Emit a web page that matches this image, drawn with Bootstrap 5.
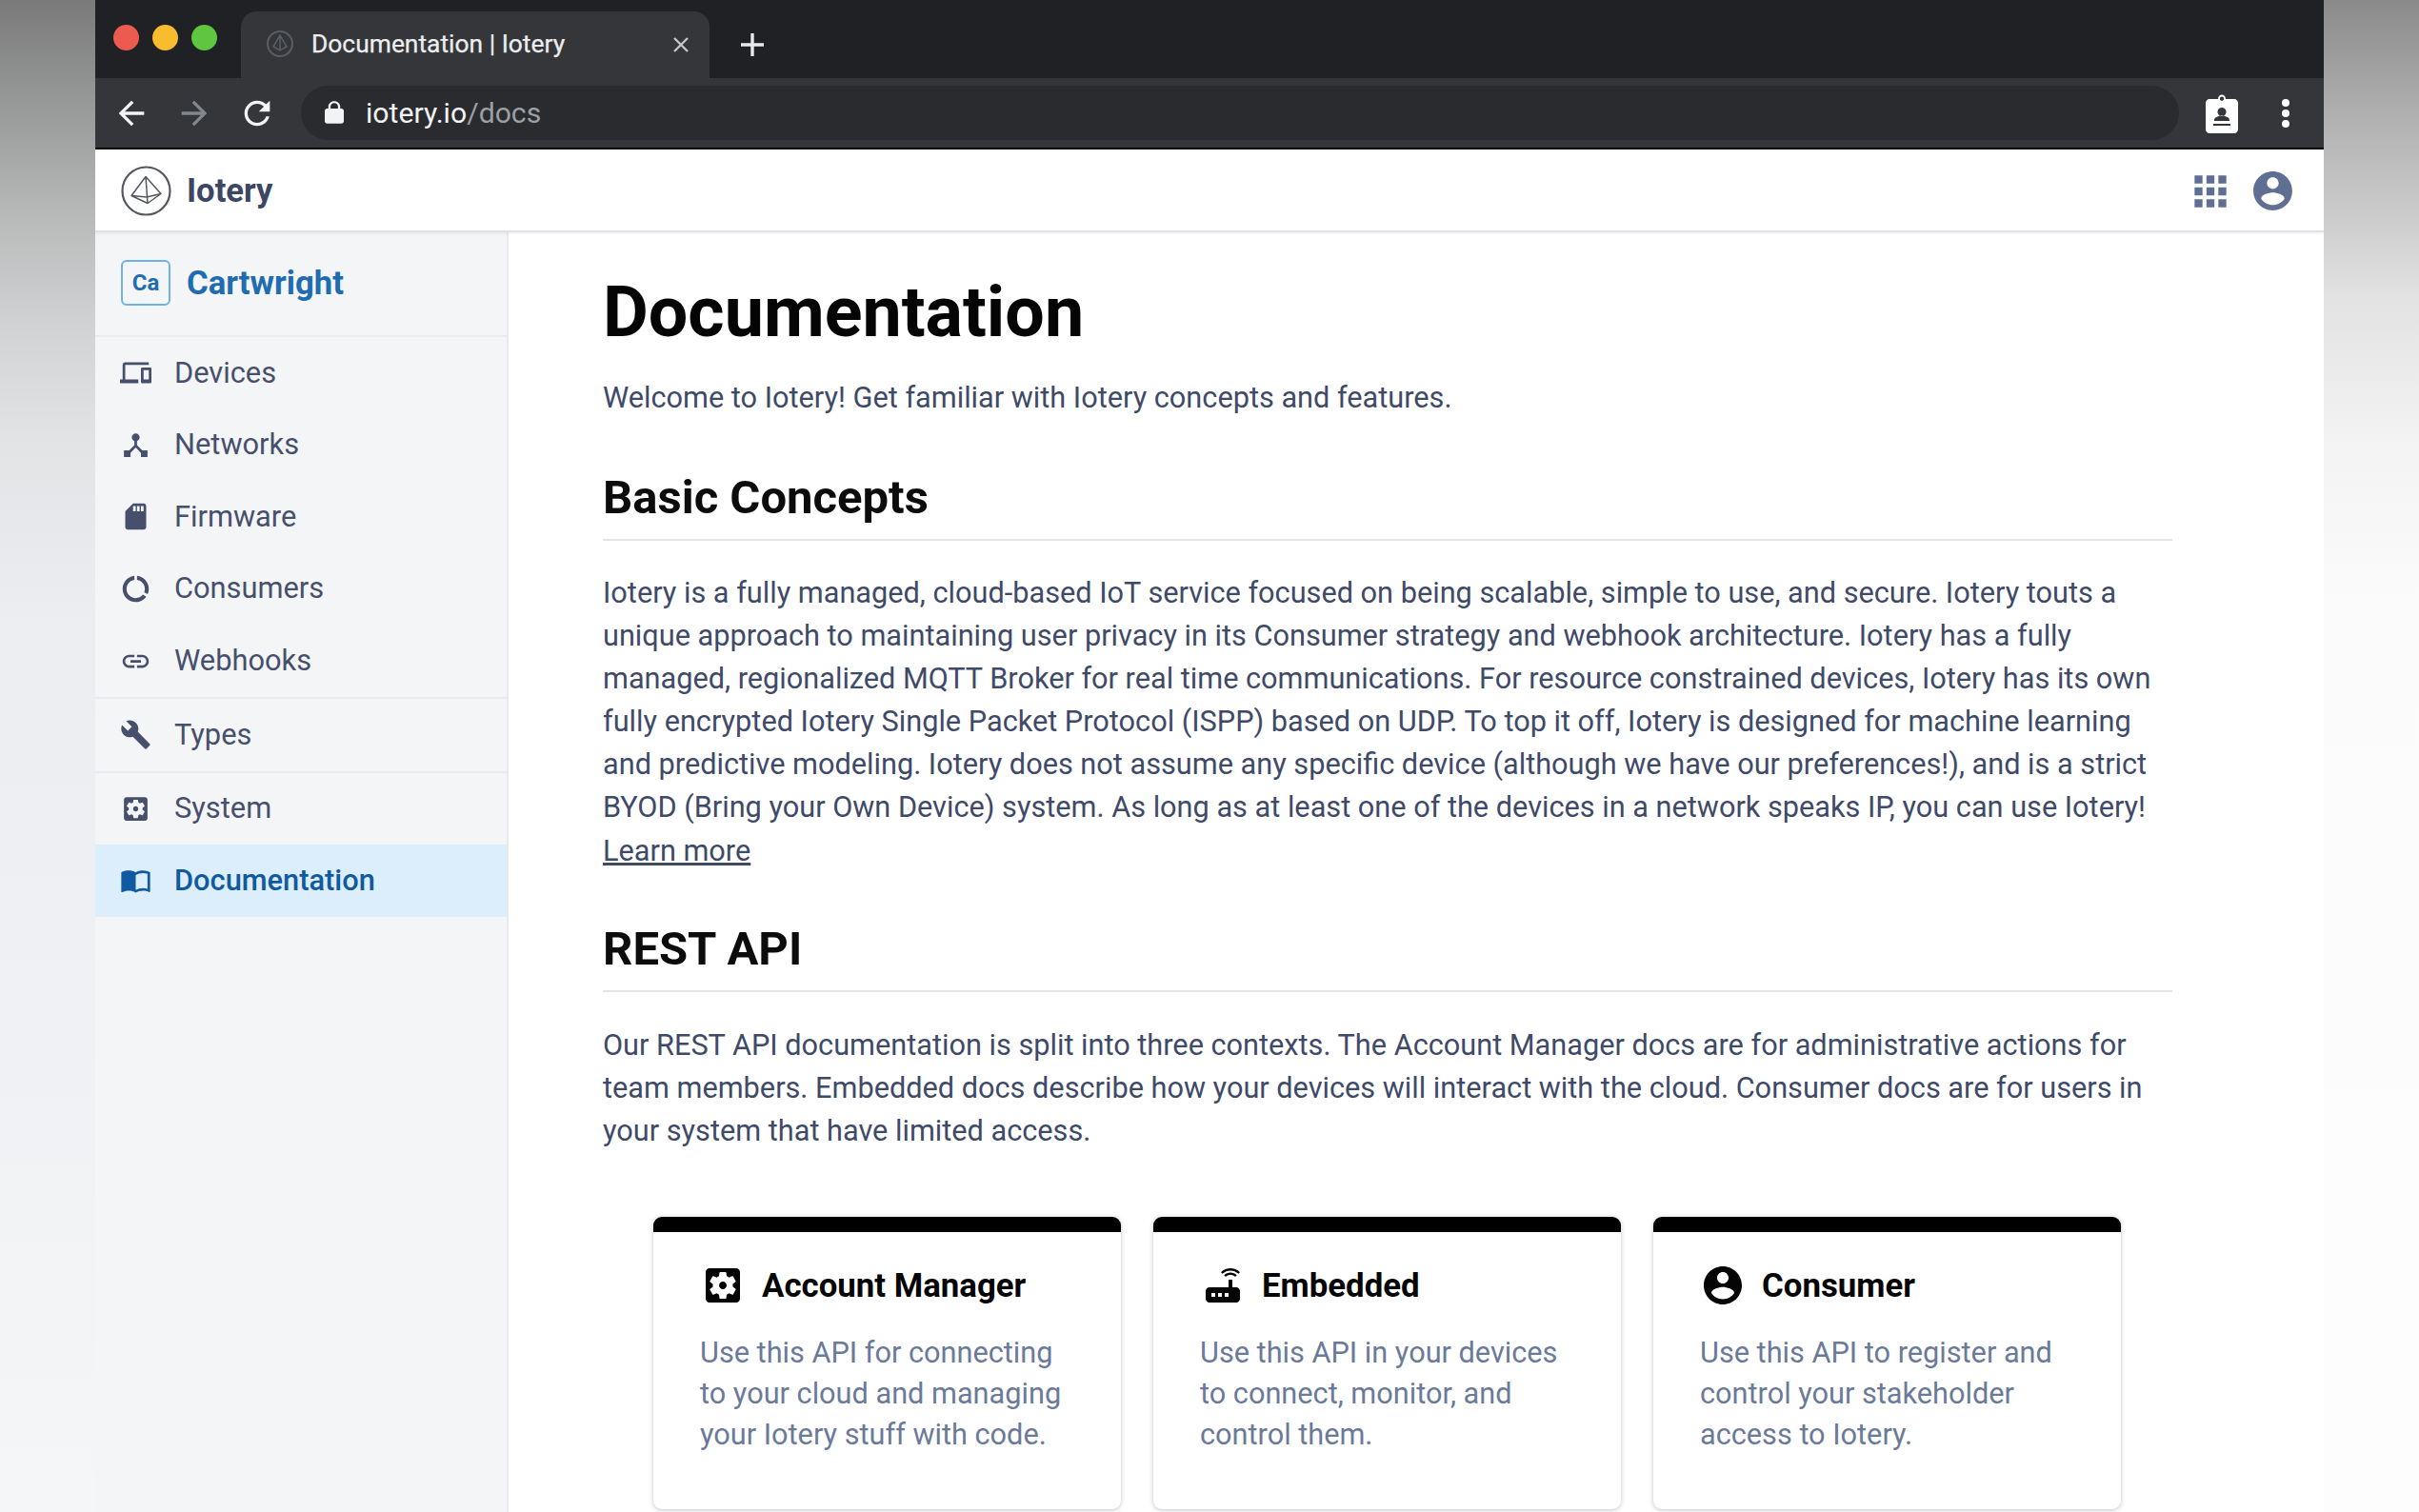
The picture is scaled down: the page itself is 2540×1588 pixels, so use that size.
<!DOCTYPE html>
<html lang="en">
<head>
<meta charset="utf-8">
<title>Documentation | Iotery</title>
<link href="https://cdn.jsdelivr.net/npm/bootstrap@5.3.0/dist/css/bootstrap.min.css" rel="stylesheet">
<style>
html,body{height:1588px;overflow:hidden}
body{font-family:Roboto,"Liberation Sans",sans-serif;background:linear-gradient(180deg,#7a7a7a 0,#9a9b9b 120px,#bbbcbc 240px,#d0d2d3 340px,#e2e3e5 460px,#ebedf0 640px,#eef0f3 1000px,#f5f6f7 1588px) left top/50% 100% no-repeat,linear-gradient(180deg,#8a8a8a 0,#b0b0b0 120px,#cfcfcf 240px,#e2e2e2 310px,#f3f3f3 464px,#fbfbfb 630px,#fdfdfd 1588px) right top/50% 100% no-repeat;color:#3f4a68}
.win{margin:0 100px;height:1588px;background:#fff;overflow:hidden}
.tabstrip{height:82px;background:#202124;padding-top:12px}
.lights{width:154px;padding:14px 0 0 19px;gap:14px}
.dot{width:27px;height:27px;border-radius:50%;display:block}
.d1{background:#ed5a50}.d2{background:#f8bd2e}.d3{background:#5fc63f}
.ctab{width:492px;height:70px;background:#35363a;border-radius:16px 16px 0 0;padding:0 20px 0 26px;color:#eceef0;font-size:26.4px;margin-left:-1px;-webkit-text-stroke:.25px #eceef0}
.ctab .ttl{margin-left:18px;margin-top:-1px}
.tabx{margin-left:auto}
.plus{margin-left:31px}
.toolbar{height:73px;background:#35363a;padding:8px 35px 8px 18px;gap:26px}
.omni{height:57px;background:#292b2e;border-radius:29px;margin-right:2px;padding-left:20px;font-size:30.2px;color:#f1f3f4}
.omni span{color:#9aa0a6}
.omni svg{margin-right:18px}
.tbicons{gap:45px}
.blackline{height:2px;background:#000}
.appbar{height:87px;padding:2px 27px 0;border-bottom:2px solid #dfe1e6;box-shadow:0 1px 3px rgba(60,70,100,.1);position:relative;z-index:2;background:#fff}
.brand{font-size:34.6px;font-weight:700;color:#3d4663;margin-left:16px}
.blue{fill:#5f6f94}
.avatar{margin-left:15.5px;margin-right:2.5px}
.body-row{height:1344px}
.side{width:434px;flex:none;background:#f4f5f7;border-right:2px solid #e8eaee}
.org{height:110px;padding:0 27px;border-bottom:2px solid #e9ebef}
.orgbadge{width:52px;height:48px;border:2px solid #6db3ea;border-radius:6px;color:#1f6db0;font-weight:700;font-size:24px;margin-top:-2px}
.orgname{font-size:34.7px;font-weight:700;color:#1f6db0;margin-left:17px;margin-top:-2px}
.sgroup{border-bottom:2px solid #e9ebef}
.sgroup.nb{border-bottom:0}
.sitem{height:75.6px;padding-left:26px;font-size:30.8px;color:#46506d}
.sitem svg{width:33px;height:33px;fill:#46506d;margin-right:24px;flex:none}
.sitem.on{background:#dcedfb;color:#0f5aa0;font-weight:500}
.sitem.on svg{fill:#0f5aa0}
.content{padding:0 159px 0 99px;min-width:0;flex:1}
.content h1{font-size:73.6px;font-weight:700;color:#050505;margin:0;padding-top:38px;line-height:92px}
.lede{font-size:30.7px;line-height:45px;margin:21px 0 0;color:#3f4a68}
.content h2{font-size:49px;font-weight:700;color:#0c0c0c;margin:0;line-height:60px}
.secthead{border-bottom:2px solid #e4e5e9;padding-bottom:13px;margin-top:53px;margin-bottom:32px}
.secthead.later{margin-top:51px;margin-bottom:33px}
.para{font-size:30.7px;line-height:45.1px;margin:0;color:#3f4a68}
.para a{color:#3f4a68}
.cards{padding:0 54px 0 53px;gap:34px;margin-top:68px}
.apicard{width:491px;height:307px;flex:none;border:0;border-radius:9px;box-shadow:0 1px 5px rgba(30,40,60,.28);border-top:16px solid #000;padding:34px 40px 0 49px}
.ctitle{font-size:34.8px;font-weight:700;color:#050505;height:44px;margin-left:2px}
.ctitle svg{width:48px;height:48px;fill:#050505;margin-right:17px;margin-left:-2px;flex:none}
.cdesc{font-size:30.7px;line-height:43px;color:#6b7a99;margin:27px 0 0}
</style>
</head>
<body>
<div class="win d-flex flex-column">
  <div class="tabstrip d-flex">
    <div class="lights d-flex"><i class="dot d1"></i><i class="dot d2"></i><i class="dot d3"></i></div>
    <div class="ctab d-flex align-items-center">
      <svg width="30" height="32" viewBox="0 0 30 32"><circle cx="15" cy="15" r="13" fill="none" stroke="#5a5d61" stroke-width="2"/><path d="M15 6 8 18l7 4 7-4zM15 6v16" fill="none" stroke="#5a5d61" stroke-width="1.500"/></svg>
      <span class="ttl">Documentation | Iotery</span>
      <svg class="tabx" width="20" height="20" viewBox="0 0 20 20"><path d="M3 3l14 14M17 3 3 17" stroke="#c4c6c9" stroke-width="2.400"/></svg>
    </div>
    <svg class="plus align-self-center" width="28" height="28" viewBox="0 0 28 28"><path d="M14 2v24M2 14h24" stroke="#e8eaed" stroke-width="3.400"/></svg>
  </div>
  <div class="toolbar d-flex align-items-center">
    <svg width="40" height="40" viewBox="0 0 24 24" fill="#f1f3f4"><path d="M20 11H7.830l5.590-5.590L12 4l-8 8 8 8 1.410-1.410L7.830 13H20v-2z"/></svg>
    <svg width="40" height="40" viewBox="0 0 24 24" fill="#83878b"><path d="M12 4l-1.410 1.410L16.170 11H4v2h12.170l-5.580 5.590L12 20l8-8z"/></svg>
    <svg width="40" height="40" viewBox="0 0 24 24" fill="#f1f3f4"><path d="M17.650 6.350C16.200 4.900 14.210 4 12 4c-4.420 0-7.990 3.580-7.990 8s3.570 8 7.990 8c3.730 0 6.840-2.550 7.730-6h-2.080c-.82 2.330-3.040 4-5.650 4-3.310 0-6-2.690-6-6s2.690-6 6-6c1.660 0 3.140.69 4.220 1.780L13 11h7V4l-2.350 2.350z"/></svg>
    <div class="omni d-flex align-items-center flex-grow-1">
      <svg width="30" height="27" viewBox="0 0 24 24" preserveAspectRatio="none" fill="#f1f3f4"><path d="M18 8h-1V6c0-2.760-2.240-5-5-5S7 3.240 7 6v2H6c-1.100 0-2 .9-2 2v10c0 1.100.9 2 2 2h12c1.100 0 2-.9 2-2V10c0-1.100-.9-2-2-2zM15.100 8H8.900V6c0-1.710 1.390-3.100 3.100-3.100 1.710 0 3.100 1.390 3.100 3.100v2z"/></svg>
      <div>iotery.io<span>/docs</span></div>
    </div>
    <div class="tbicons d-flex align-items-center">
      <svg width="34" height="42" viewBox="0 0 34 42"><path fill="#fff" fill-rule="evenodd" d="M4 6h9c0-6 8-6 8 0h9c2 0 4 2 4 4v28c0 2-2 4-4 4H4c-2 0-4-2-4-4V10c0-2 2-4 4-4zM17 3.500a2.200 2.200 0 1 0 .01 0zM17 15a4.500 4.500 0 1 0 .01 0zM9 28c0-3 5-4.500 8-4.500s8 1.500 8 4.500v1H9zM8 32v2h18v-2z"/></svg>
      <svg width="10" height="32" viewBox="0 0 10 32" fill="#fff"><circle cx="5" cy="5" r="4"/><circle cx="5" cy="16" r="4"/><circle cx="5" cy="27" r="4"/></svg>
    </div>
  </div>
  <div class="blackline"></div>
  <div class="appbar d-flex align-items-center">
    <svg width="53" height="53" viewBox="0 0 53 53" fill="none" stroke="#55585e"><circle cx="26.500" cy="26.500" r="25" stroke-width="2.200"/><path d="M26 11.500 11 31.500 28 39.500 42 29.500zM26 11.500 28 39.500M11 31.500 27 33 42 29.500" stroke-width="1.500" stroke-linejoin="round"/></svg>
    <div class="brand">Iotery</div>
    <svg class="ms-auto blue" width="50" height="50" viewBox="0 0 24 24"><path d="M4 8h4V4H4v4zm6 12h4v-4h-4v4zm-6 0h4v-4H4v4zm0-6h4v-4H4v4zm6 0h4v-4h-4v4zm6-10v4h4V4h-4zm-6 4h4V4h-4v4zm6 6h4v-4h-4v4zm0 6h4v-4h-4v4z"/></svg>
    <svg class="blue avatar" width="49" height="49" viewBox="0 0 24 24"><path d="M12 2C6.480 2 2 6.480 2 12s4.480 10 10 10 10-4.480 10-10S17.520 2 12 2zm0 3c1.660 0 3 1.340 3 3s-1.340 3-3 3-3-1.340-3-3 1.340-3 3-3zm0 14.200c-2.500 0-4.710-1.280-6-3.220.030-1.990 4-3.080 6-3.080 1.990 0 5.970 1.090 6 3.080-1.290 1.940-3.500 3.220-6 3.220z"/></svg>
  </div>
  <div class="body-row d-flex">
    <aside class="side">
      <div class="org d-flex align-items-center">
        <div class="orgbadge d-flex align-items-center justify-content-center">Ca</div>
        <div class="orgname">Cartwright</div>
      </div>
      <div class="sgroup">
        <div class="sitem d-flex align-items-center"><svg viewBox="0 0 24 24"><path d="M4 6h18V4H4c-1.100 0-2 .9-2 2v11H0v3h14v-3H4V6zm19 2h-6c-.55 0-1 .45-1 1v10c0 .55.45 1 1 1h6c.55 0 1-.45 1-1V9c0-.55-.45-1-1-1zm-1 9h-4v-7h4v7z"/></svg>Devices</div>
        <div class="sitem d-flex align-items-center"><svg viewBox="0 0 24 24"><path d="M17 16l-4-4V8.820C14.160 8.400 15 7.300 15 6c0-1.660-1.340-3-3-3S9 4.340 9 6c0 1.300.84 2.400 2 2.820V12l-4 4H3v5h5v-3.050l4-4.200 4 4.200V21h5v-5h-4z"/></svg>Networks</div>
        <div class="sitem d-flex align-items-center"><svg viewBox="0 0 24 24"><path d="M18 2h-8L4.020 8 4 20c0 1.100.9 2 2 2h12c1.100 0 2-.9 2-2V4c0-1.100-.9-2-2-2zm-6 6h-2V4h2v4zm3 0h-2V4h2v4zm3 0h-2V4h2v4z"/></svg>Firmware</div>
        <div class="sitem d-flex align-items-center"><svg viewBox="0 0 24 24"><path d="M13 2.050v3.030c3.390.49 6 3.390 6 6.920 0 .9-.18 1.750-.48 2.540l2.600 1.530c.56-1.240.88-2.620.88-4.070 0-5.180-3.950-9.450-9-9.950zM12 19c-3.870 0-7-3.130-7-7 0-3.530 2.610-6.430 6-6.920V2.050c-5.060.5-9 4.760-9 9.950 0 5.520 4.470 10 9.990 10 3.310 0 6.240-1.610 8.060-4.090l-2.600-1.530C16.170 17.980 14.210 19 12 19z"/></svg>Consumers</div>
        <div class="sitem d-flex align-items-center"><svg viewBox="0 0 24 24"><path d="M3.900 12c0-1.710 1.390-3.100 3.100-3.100h4V7H7c-2.760 0-5 2.240-5 5s2.240 5 5 5h4v-1.900H7c-1.710 0-3.100-1.390-3.100-3.100zM8 13h8v-2H8v2zm9-6h-4v1.900h4c1.710 0 3.100 1.390 3.100 3.100s-1.390 3.100-3.100 3.100h-4V17h4c2.760 0 5-2.240 5-5s-2.240-5-5-5z"/></svg>Webhooks</div>
      </div>
      <div class="sgroup">
        <div class="sitem d-flex align-items-center"><svg viewBox="0 0 24 24"><path d="M22.700 19l-9.100-9.100c.9-2.300.4-5-1.500-6.900-2-2-5-2.400-7.400-1.300L9 6 6 9 1.600 4.700C.4 7.100.9 10.100 2.900 12.100c1.900 1.900 4.600 2.400 6.900 1.500l9.100 9.100c.4.4 1 .4 1.400 0l2.300-2.300c.5-.4.5-1.100.1-1.400z"/></svg>Types</div>
      </div>
      <div class="sgroup nb">
        <div class="sitem d-flex align-items-center"><svg viewBox="0 0 24 24"><path d="M12 10c-1.100 0-2 .9-2 2s.9 2 2 2 2-.9 2-2-.9-2-2-2zm7-7H5c-1.110 0-2 .9-2 2v14c0 1.100.89 2 2 2h14c1.110 0 2-.9 2-2V5c0-1.100-.89-2-2-2zm-1.750 9c0 .23-.02.46-.05.68l1.480 1.160c.13.11.17.3.08.45l-1.400 2.420c-.09.15-.27.21-.43.15l-1.740-.7c-.36.28-.76.51-1.180.69l-.26 1.850c-.03.17-.18.3-.35.3h-2.800c-.17 0-.32-.13-.35-.29l-.26-1.850c-.43-.18-.82-.41-1.180-.69l-1.740.7c-.16.06-.34 0-.43-.15l-1.400-2.420c-.09-.15-.05-.34.08-.45l1.480-1.160c-.03-.23-.05-.46-.05-.69 0-.23.02-.46.05-.68l-1.480-1.160c-.13-.11-.17-.3-.08-.45l1.400-2.420c.09-.15.27-.21.43-.15l1.740.7c.36-.28.76-.51 1.180-.69l.26-1.850c.03-.17.18-.3.35-.3h2.800c.17 0 .32.13.35.29l.26 1.850c.43.18.82.41 1.180.69l1.740-.7c.16-.06.34 0 .43.15l1.400 2.420c.09.15.05.34-.08.45l-1.480 1.160c.03.23.05.46.05.69z"/></svg>System</div>
        <div class="sitem on d-flex align-items-center"><svg viewBox="0 0 24 24"><path d="M21 5c-1.110-.35-2.330-.5-3.500-.5-1.950 0-4.050.4-5.500 1.500-1.450-1.100-3.550-1.500-5.500-1.500S2.450 4.900 1 6v14.650c0 .25.25.5.5.5.1 0 .15-.05.25-.05C3.100 20.450 5.050 20 6.500 20c1.950 0 4.050.4 5.500 1.500 1.350-.85 3.800-1.500 5.500-1.500 1.650 0 3.350.3 4.750 1.050.1.05.15.05.25.05.25 0 .5-.25.5-.5V6c-.6-.45-1.250-.75-2-1zm0 13.500c-1.100-.35-2.300-.5-3.500-.5-1.700 0-4.150.65-5.500 1.500V8c1.350-.85 3.800-1.500 5.500-1.500 1.200 0 2.400.15 3.500.5v11.500z"/></svg>Documentation</div>
      </div>
    </aside>
    <main class="content">
      <h1>Documentation</h1>
      <p class="lede">Welcome to Iotery! Get familiar with Iotery concepts and features.</p>
      <div class="secthead"><h2>Basic Concepts</h2></div>
      <p class="para">Iotery is a fully managed, cloud-based IoT service focused on being scalable, simple to use, and secure. Iotery touts a unique approach to maintaining user privacy in its Consumer strategy and webhook architecture. Iotery has a fully managed, regionalized MQTT Broker for real time communications. For resource constrained devices, Iotery has its own fully encrypted Iotery Single Packet Protocol (ISPP) based on UDP. To top it off, Iotery is designed for machine learning and predictive modeling. Iotery does not assume any specific device (although we have our preferences!), and is a strict BYOD (Bring your Own Device) system. As long as at least one of the devices in a network speaks IP, you can use Iotery! <a class="d-block" href="#">Learn more</a></p>
      <div class="secthead later"><h2>REST API</h2></div>
      <p class="para">Our REST API documentation is split into three contexts. The Account Manager docs are for administrative actions for team members. Embedded docs describe how your devices will interact with the cloud. Consumer docs are for users in your system that have limited access.</p>
      <div class="cards d-flex">
        <div class="card apicard">
          <div class="ctitle d-flex align-items-center"><svg viewBox="0 0 24 24"><path d="M12 10c-1.100 0-2 .9-2 2s.9 2 2 2 2-.9 2-2-.9-2-2-2zm7-7H5c-1.110 0-2 .9-2 2v14c0 1.100.89 2 2 2h14c1.110 0 2-.9 2-2V5c0-1.100-.89-2-2-2zm-1.750 9c0 .23-.02.46-.05.68l1.480 1.160c.13.11.17.3.08.45l-1.400 2.420c-.09.15-.27.21-.43.15l-1.740-.7c-.36.28-.76.51-1.180.69l-.26 1.850c-.03.17-.18.3-.35.3h-2.800c-.17 0-.32-.13-.35-.29l-.26-1.850c-.43-.18-.82-.41-1.180-.69l-1.740.7c-.16.06-.34 0-.43-.15l-1.400-2.420c-.09-.15-.05-.34.08-.45l1.480-1.160c-.03-.23-.05-.46-.05-.69 0-.23.02-.46.05-.68l-1.480-1.160c-.13-.11-.17-.3-.08-.45l1.400-2.420c.09-.15.27-.21.43-.15l1.740.7c.36-.28.76-.51 1.180-.69l.26-1.850c.03-.17.18-.3.35-.3h2.800c.17 0 .32.13.35.29l.26 1.850c.43.18.82.41 1.180.69l1.740-.7c.16-.06.34 0 .43.15l1.400 2.420c.09.15.05.34-.08.45l-1.480 1.160c.03.23.05.46.05.69z"/></svg>Account Manager</div>
          <p class="cdesc">Use this API for connecting to your cloud and managing your Iotery stuff with code.</p>
        </div>
        <div class="card apicard">
          <div class="ctitle d-flex align-items-center"><svg viewBox="0 0 24 24"><path d="M20.200 5.900l.8-.8C19.600 3.700 17.800 3 16 3s-3.600.7-5 2.100l.8.8C13 4.800 14.500 4.200 16 4.200s3 .6 4.200 1.700zm-.9.8c-.9-.9-2.100-1.400-3.300-1.400s-2.400.5-3.300 1.400l.8.8c.7-.7 1.600-1 2.500-1 .9 0 1.800.3 2.500 1l.8-.8zM19 13h-2V9h-2v4H5c-1.100 0-2 .9-2 2v4c0 1.100.9 2 2 2h14c1.100 0 2-.9 2-2v-4c0-1.100-.9-2-2-2zM8 18H6v-2h2v2zm3.500 0h-2v-2h2v2zm3.500 0h-2v-2h2v2z"/></svg>Embedded</div>
          <p class="cdesc">Use this API in your devices to connect, monitor, and control them.</p>
        </div>
        <div class="card apicard">
          <div class="ctitle d-flex align-items-center"><svg viewBox="0 0 24 24"><path d="M12 2C6.480 2 2 6.480 2 12s4.480 10 10 10 10-4.480 10-10S17.520 2 12 2zm0 3c1.660 0 3 1.340 3 3s-1.340 3-3 3-3-1.340-3-3 1.340-3 3-3zm0 14.200c-2.500 0-4.710-1.280-6-3.220.030-1.990 4-3.080 6-3.080 1.990 0 5.970 1.090 6 3.080-1.290 1.940-3.500 3.220-6 3.220z"/></svg>Consumer</div>
          <p class="cdesc">Use this API to register and control your stakeholder access to Iotery.</p>
        </div>
      </div>
    </main>
  </div>
</div>
<script src="https://cdn.jsdelivr.net/npm/bootstrap@5.3.0/dist/js/bootstrap.bundle.min.js"></script>
</body>
</html>
